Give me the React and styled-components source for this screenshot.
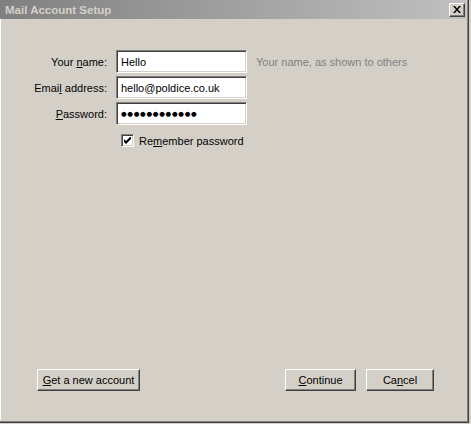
import React from "react"
import styled, { createGlobalStyle } from "styled-components"

const GlobalStyle = createGlobalStyle`
  html, body {
    margin: 0;
    padding: 0;
    background: #d4d0c8;
  }
  body {
    font-family: "Liberation Sans", Arial, sans-serif;
    font-size: 11px;
    color: #000;
  }
`

const Window = styled.div`
  width: 469px;
  height: 423px;
  box-sizing: border-box;
  display: flex;
  flex-direction: column;
  background: #d4d0c8;
  border-right: 1px solid #404040;
  border-bottom: 1px solid #404040;
  box-shadow: inset -1px -1px 0 #808080;
  padding: 0 2px 2px 0;
`

const TitleBar = styled.div`
  height: 19px;
  display: flex;
  align-items: center;
  justify-content: space-between;
  padding: 0 1px 0 5px;
  background: linear-gradient(to right, #808080, #c0c0c0);
  color: #d4d0c8;
  font-weight: bold;
  font-size: 11.5px;
`

const CloseButton = styled.div`
  width: 16px;
  height: 14px;
  box-sizing: border-box;
  display: flex;
  align-items: center;
  justify-content: center;
  background: #d4d0c8;
  border: 1px solid;
  border-color: #fff #404040 #404040 #fff;
  box-shadow: inset -1px -1px 0 #808080;
`

const Client = styled.div`
  flex: 1;
  display: flex;
  flex-direction: column;
  border-left: 1px solid #fff;
  padding: 31px 32px 29px 0;
`

const Form = styled.div`
  display: grid;
  grid-template-columns: 106px 131px auto;
  column-gap: 9px;
  row-gap: 3px;
  align-items: center;
`

const Label = styled.div`
  text-align: right;
`

const Field = styled.div`
  height: 23px;
  box-sizing: border-box;
  display: flex;
  align-items: center;
  padding: 0 4px;
  background: #fff;
  border: 1px solid;
  border-color: #808080 #fff #fff #808080;
  box-shadow: inset 1px 1px 0 #404040, inset -1px -1px 0 #d4d0c8;
  white-space: nowrap;
  overflow: hidden;
`

const Dots = styled.span`
  font-family: "DejaVu Sans", sans-serif;
  font-size: 6.5px;
  letter-spacing: 0.7px;
`

const Hint = styled.div`
  color: #808080;
`

const CheckRow = styled.label`
  grid-column: 2 / 4;
  display: flex;
  align-items: center;
  gap: 5px;
  margin: 6px 0 0 5px;
`

const CheckBox = styled.span`
  width: 13px;
  height: 13px;
  box-sizing: border-box;
  display: flex;
  align-items: center;
  justify-content: center;
  background: #fff;
  border: 1px solid;
  border-color: #808080 #fff #fff #808080;
  box-shadow: inset 1px 1px 0 #404040, inset -1px -1px 0 #d4d0c8;
`

const Footer = styled.div`
  margin-top: auto;
  display: flex;
  align-items: center;
  padding-left: 36px;
  gap: 10px;
`

const Button = styled.div`
  width: ${(p) => p.$w}px;
  height: 22px;
  box-sizing: border-box;
  display: flex;
  align-items: center;
  justify-content: center;
  background: #d4d0c8;
  border: 1px solid;
  border-color: #fff #404040 #404040 #fff;
  box-shadow: inset -1px -1px 0 #808080;
  margin-left: ${(p) => (p.$push ? "auto" : "0")};
`

const Key = styled.span`
  text-decoration: underline;
`

const App = () => (
  <>
    <GlobalStyle />
    <Window>
      <TitleBar>
        <span>Mail Account Setup</span>
        <CloseButton>
          <svg width="8" height="7" viewBox="0 0 8 7">
            <path d="M0 0h2l2 2.5L6 0h2L5 3.5 8 7H6L4 4.5 2 7H0l3-3.5z" fill="#000" />
          </svg>
        </CloseButton>
      </TitleBar>
      <Client>
        <Form>
          <Label>
            Your <Key>n</Key>ame:
          </Label>
          <Field>Hello</Field>
          <Hint>Your name, as shown to others</Hint>

          <Label>
            Emai<Key>l</Key> address:
          </Label>
          <Field>hello@poldice.co.uk</Field>
          <span />

          <Label>
            <Key>P</Key>assword:
          </Label>
          <Field>
            <Dots>{"●".repeat(12)}</Dots>
          </Field>
          <span />

          <CheckRow>
            <CheckBox>
              <svg width="7" height="7" viewBox="0 0 7 7">
                <path d="M0 2v3l2 2 5-5V-1L2 4z" fill="#000" />
              </svg>
            </CheckBox>
            <span>
              Re<Key>m</Key>ember password
            </span>
          </CheckRow>
        </Form>

        <Footer>
          <Button $w={103}>
            <span>
              <Key>G</Key>et a new account
            </span>
          </Button>
          <Button $w={71} $push>
            <span>
              <Key>C</Key>ontinue
            </span>
          </Button>
          <Button $w={68}>
            <span>
              Ca<Key>n</Key>cel
            </span>
          </Button>
        </Footer>
      </Client>
    </Window>
  </>
)

export default App
